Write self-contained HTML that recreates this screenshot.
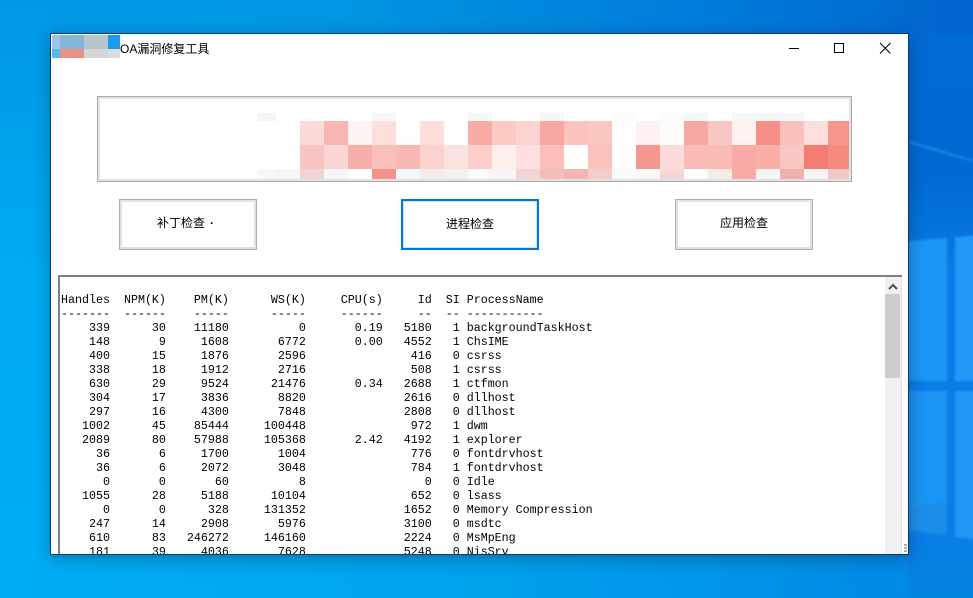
<!DOCTYPE html>
<html lang="zh">
<head>
<meta charset="utf-8">
<title>OA漏洞修复工具</title>
<style>
html,body{margin:0;padding:0;width:973px;height:598px;overflow:hidden;background:#0090e4;font-family:"Liberation Sans","Noto Sans CJK SC",sans-serif}
#bg{position:absolute;left:0;top:0;width:973px;height:598px}
#win{position:absolute;left:51px;top:34px;width:857px;height:520px;background:#fff;box-shadow:0 0 0 1px rgba(10,50,85,.85),0 4px 16px rgba(0,30,70,.4);overflow:hidden}
.a{position:absolute}
#title{position:absolute;left:69px;top:7px;font-size:12px;line-height:17px;color:#000;white-space:nowrap}
.c{position:absolute;width:24px}
#imgbox{position:absolute;left:46px;top:62px;width:755px;height:86px;box-sizing:border-box;border:1px solid #a9a9a9;background:#fff;overflow:hidden}
#imgbox:before{content:"";position:absolute;left:0;top:0;right:0;bottom:0;border:2px solid #e2e2e2;z-index:2}
.btn{position:absolute;top:165px;width:138px;height:51px;box-sizing:border-box;border:1px solid #adadad;box-shadow:inset 0 0 0 2px #e1e1e1;background:#fff;font-size:12px;line-height:47px;text-align:center;color:#000;white-space:pre}
.btn.f{border:2px solid #0078d7;box-shadow:inset 0 0 0 1px #cfe3f5;line-height:47px}
#tb{position:absolute;left:7px;top:241px;width:842px;height:279px;background:#fff;border-left:2px solid #808080;border-top:2px solid #808080;overflow:hidden;box-sizing:content-box}
#tb pre{position:absolute;left:1px;top:16px;margin:0;font-family:"Liberation Mono",monospace;font-size:11.67px;line-height:14px;color:#000}
#sb{position:absolute;left:834px;top:243px;width:16px;height:277px;background:#f0f0f0}
#th{position:absolute;left:834px;top:260px;width:15px;height:84px;background:#cdcdcd}
#rl{position:absolute;left:850px;top:243px;width:1px;height:277px;background:#e3e3e3}
.dot{position:absolute;left:853px;width:3px;height:2px;background:#b0b0b0}
</style>
</head>
<body>
<svg id="bg" viewBox="0 0 973 598" xmlns="http://www.w3.org/2000/svg">
<defs>
<linearGradient id="top" x1="0" y1="0" x2="1" y2="0">
<stop offset="0" stop-color="#0098e6"/>
<stop offset="0.35" stop-color="#0096e2"/>
<stop offset="0.8" stop-color="#0076d8"/>
<stop offset="1" stop-color="#0064ce"/>
</linearGradient>
<linearGradient id="left" x1="0" y1="0" x2="0" y2="1">
<stop offset="0" stop-color="#0098e6"/>
<stop offset="0.5" stop-color="#00aaf2"/>
<stop offset="1" stop-color="#00aef5"/>
</linearGradient>
<linearGradient id="bot" x1="0" y1="0" x2="1" y2="0">
<stop offset="0" stop-color="#00aef5"/>
<stop offset="0.5" stop-color="#00a2ec"/>
<stop offset="0.93" stop-color="#008ae4"/>
<stop offset="1" stop-color="#0082de"/>
</linearGradient>
<linearGradient id="right" x1="0" y1="0" x2="1" y2="0">
<stop offset="0" stop-color="#000000" stop-opacity="0"/>
</linearGradient>
<linearGradient id="rightv" x1="0" y1="0" x2="0" y2="1">
<stop offset="0" stop-color="#006bd2"/>
<stop offset="0.25" stop-color="#006ad2"/>
<stop offset="0.42" stop-color="#0a7ae6"/>
<stop offset="0.9" stop-color="#0a7ee6"/>
<stop offset="1" stop-color="#0084de"/>
</linearGradient>
<filter id="b" x="-20%" y="-20%" width="140%" height="140%"><feGaussianBlur stdDeviation="1"/></filter>
</defs>
<rect width="973" height="598" fill="url(#bot)"/>
<rect x="0" y="0" width="973" height="34" fill="url(#top)"/>
<rect x="0" y="0" width="51" height="554" fill="url(#left)"/>
<rect x="0" y="554" width="973" height="44" fill="url(#bot)"/>
<rect x="908" y="34" width="65" height="564" fill="url(#rightv)"/>
<g filter="url(#b)">
<polygon points="908,140 973,160 973,162 908,143" fill="#1a82ea"/>
<polygon points="908,241 947,238 947,381 908,381" fill="#1e96f4"/>
<polygon points="955,237 980,235 980,381 955,381" fill="#2098f6"/>
<polygon points="908,391 947,391 947,535 908,530" fill="#1e94f4"/>
<polygon points="955,391 980,391 980,540 955,537" fill="#2096f4"/>
<polygon points="908,506 947,502 947,535 908,530" fill="#1a8eea"/>
</g>
</svg>
<div id="win">
<div class="a" style="left:1px;top:1px;width:8px;height:14px;background:#9fc6e0"></div>
<div class="a" style="left:9px;top:1px;width:24px;height:14px;background:#85b6d8"></div>
<div class="a" style="left:33px;top:1px;width:24px;height:14px;background:#b9c5cc"></div>
<div class="a" style="left:57px;top:1px;width:12px;height:14px;background:#1a9ae8"></div>
<div class="a" style="left:1px;top:15px;width:8px;height:9px;background:#5ab7ea"></div>
<div class="a" style="left:9px;top:15px;width:24px;height:9px;background:#ea908b"></div>
<div class="a" style="left:33px;top:15px;width:24px;height:9px;background:#d5d5d5"></div>
<div class="a" style="left:57px;top:15px;width:12px;height:9px;background:#dcdcdc"></div>
<div id="title">OA漏洞修复工具</div>
<svg class="a" style="left:720px;top:0;width:137px;height:30px" viewBox="0 0 137 30" xmlns="http://www.w3.org/2000/svg" fill="none" stroke="#000" stroke-width="1">
<path d="M18 14.500H28"/>
<rect x="63.500" y="9.500" width="9" height="9"/>
<path d="M109 9L119.500 19.500M119.500 9L109 19.500"/>
</svg>
<div id="imgbox">
<div style="position:absolute;left:-98px;top:-97px;width:973px;height:300px">
<div class="c" style="left:257px;width:19px;top:113px;height:8px;background:#f5f5f5"></div>
<div class="c" style="left:372px;top:113px;height:8px;background:#f6f6f6"></div>
<div class="c" style="left:468px;top:113px;height:8px;background:#f6f6f6"></div>
<div class="c" style="left:540px;top:113px;height:8px;background:#f6f6f6"></div>
<div class="c" style="left:612px;top:113px;height:8px;background:#fcfcfc"></div>
<div class="c" style="left:660px;top:113px;height:8px;background:#fbfbfb"></div>
<div class="c" style="left:684px;top:113px;height:8px;background:#f7f7f7"></div>
<div class="c" style="left:732px;width:72px;top:113px;height:8px;background:#f7f7f7"></div>

<div class="c" style="left:300px;top:121px;height:24px;background:#fadad8"></div>
<div class="c" style="left:324px;top:121px;height:24px;background:#f8b5b1"></div>
<div class="c" style="left:348px;top:121px;height:24px;background:#fdf3f2"></div>
<div class="c" style="left:372px;top:121px;height:24px;background:#fcdedc"></div>
<div class="c" style="left:396px;top:121px;height:24px;background:#fefefe"></div>
<div class="c" style="left:420px;top:121px;height:24px;background:#fcdedb"></div>
<div class="c" style="left:468px;top:121px;height:24px;background:#f8aca6"></div>
<div class="c" style="left:492px;top:121px;height:24px;background:#fcc9c5"></div>
<div class="c" style="left:516px;top:121px;height:24px;background:#fcd5d2"></div>
<div class="c" style="left:540px;top:121px;height:24px;background:#f8a7a0"></div>
<div class="c" style="left:564px;top:121px;height:24px;background:#fcc3bf"></div>
<div class="c" style="left:588px;top:121px;height:24px;background:#fbc7c3"></div>
<div class="c" style="left:636px;top:121px;height:24px;background:#fdf2f1"></div>
<div class="c" style="left:660px;top:121px;height:24px;background:#fdfcfb"></div>
<div class="c" style="left:684px;top:121px;height:24px;background:#f8a8a3"></div>
<div class="c" style="left:708px;top:121px;height:24px;background:#f9c7c3"></div>
<div class="c" style="left:732px;top:121px;height:24px;background:#fef3f1"></div>
<div class="c" style="left:756px;top:121px;height:24px;background:#f58f87"></div>
<div class="c" style="left:780px;top:121px;height:24px;background:#f9c0bb"></div>
<div class="c" style="left:804px;top:121px;height:24px;background:#fcdfdc"></div>
<div class="c" style="left:828px;top:121px;height:24px;background:#f7948c"></div>

<div class="c" style="left:300px;top:145px;height:24px;background:#f9c5c2"></div>
<div class="c" style="left:324px;top:145px;height:24px;background:#fad7d4"></div>
<div class="c" style="left:348px;top:145px;height:24px;background:#f8aea8"></div>
<div class="c" style="left:372px;top:145px;height:24px;background:#fabfba"></div>
<div class="c" style="left:396px;top:145px;height:24px;background:#fab8b4"></div>
<div class="c" style="left:420px;top:145px;height:24px;background:#fcd2cf"></div>
<div class="c" style="left:444px;top:145px;height:24px;background:#fce2df"></div>
<div class="c" style="left:468px;top:145px;height:24px;background:#fccdc9"></div>
<div class="c" style="left:492px;top:145px;height:24px;background:#feefed"></div>
<div class="c" style="left:516px;top:145px;height:24px;background:#fde0dd"></div>
<div class="c" style="left:540px;top:145px;height:24px;background:#fabfbb"></div>
<div class="c" style="left:588px;top:145px;height:24px;background:#fac2be"></div>
<div class="c" style="left:612px;top:145px;height:24px;background:#fffcfc"></div>
<div class="c" style="left:636px;top:145px;height:24px;background:#f6978f"></div>
<div class="c" style="left:660px;top:145px;height:24px;background:#fcdcda"></div>
<div class="c" style="left:684px;top:145px;height:24px;background:#fabab6"></div>
<div class="c" style="left:708px;top:145px;height:24px;background:#fcbab5"></div>
<div class="c" style="left:732px;top:145px;height:24px;background:#f9aaa4"></div>
<div class="c" style="left:756px;top:145px;height:24px;background:#f9aea8"></div>
<div class="c" style="left:780px;top:145px;height:24px;background:#fbc6c3"></div>
<div class="c" style="left:804px;top:145px;height:24px;background:#f47c72"></div>
<div class="c" style="left:828px;top:145px;height:24px;background:#f58a7f"></div>

<div class="c" style="left:257px;width:19px;top:169px;height:10px;background:#f8f8f8"></div>
<div class="c" style="left:276px;top:169px;height:10px;background:#f6f6f6"></div>
<div class="c" style="left:300px;top:169px;height:10px;background:#f2d3d1"></div>
<div class="c" style="left:324px;top:169px;height:10px;background:#f6f6f6"></div>
<div class="c" style="left:372px;top:169px;height:10px;background:#f5938a"></div>
<div class="c" style="left:396px;top:169px;height:10px;background:#f2f7fd"></div>
<div class="c" style="left:420px;top:169px;height:10px;background:#f7ebea"></div>
<div class="c" style="left:444px;top:169px;height:10px;background:#f4f1ef"></div>
<div class="c" style="left:468px;top:169px;height:10px;background:#fafafa"></div>
<div class="c" style="left:492px;top:169px;height:10px;background:#f6f6f6"></div>
<div class="c" style="left:516px;top:169px;height:10px;background:#f2d6d4"></div>
<div class="c" style="left:540px;top:169px;height:10px;background:#f2bebb"></div>
<div class="c" style="left:564px;top:169px;height:10px;background:#f4b6b3"></div>
<div class="c" style="left:588px;top:169px;height:10px;background:#f3cdca"></div>
<div class="c" style="left:612px;top:169px;height:10px;background:#f9f9f9"></div>
<div class="c" style="left:636px;top:169px;height:10px;background:#f8f8f8"></div>
<div class="c" style="left:660px;top:169px;height:10px;background:#f4d7d6"></div>
<div class="c" style="left:708px;top:169px;height:10px;background:#f5ecea"></div>
<div class="c" style="left:732px;top:169px;height:10px;background:#f9aba5"></div>
<div class="c" style="left:756px;top:169px;height:10px;background:#f5f5f5"></div>
<div class="c" style="left:780px;top:169px;height:10px;background:#f0afac"></div>
<div class="c" style="left:804px;top:169px;height:10px;background:#f5f5f5"></div>
<div class="c" style="left:828px;top:169px;height:10px;background:#f3c8c7"></div>
</div>
</div>
<div class="btn" style="left:68px;text-align:left;padding-left:37px">补丁检查<span style="position:absolute;left:90px;top:0;font-weight:bold">·</span></div>
<div class="btn f" style="left:350px">进程检查</div>
<div class="btn" style="left:624px">应用检查</div>
<div id="tb"><pre>Handles  NPM(K)    PM(K)      WS(K)     CPU(s)     Id  SI ProcessName
-------  ------    -----      -----     ------     --  -- -----------
    339      30    11180          0       0.19   5180   1 backgroundTaskHost
    148       9     1608       6772       0.00   4552   1 ChsIME
    400      15     1876       2596               416   0 csrss
    338      18     1912       2716               508   1 csrss
    630      29     9524      21476       0.34   2688   1 ctfmon
    304      17     3836       8820              2616   0 dllhost
    297      16     4300       7848              2808   0 dllhost
   1002      45    85444     100448               972   1 dwm
   2089      80    57988     105368       2.42   4192   1 explorer
     36       6     1700       1004               776   0 fontdrvhost
     36       6     2072       3048               784   1 fontdrvhost
      0       0       60          8                 0   0 Idle
   1055      28     5188      10104               652   0 lsass
      0       0      328     131352              1652   0 Memory Compression
    247      14     2908       5976              3100   0 msdtc
    610      83   246272     146160              2224   0 MsMpEng
    181      39     4036       7628              5248   0 NisSrv</pre></div>
<div id="sb"></div>
<div id="th"></div>
<div id="rl"></div>
<svg class="a" style="left:834px;top:243px;width:16px;height:17px" viewBox="0 0 16 17" xmlns="http://www.w3.org/2000/svg"><path d="M4 12L8 8L12 12" fill="none" stroke="#505050" stroke-width="2"/></svg>
<div class="dot" style="top:510px"></div>
<div class="dot" style="top:513px"></div>
<div class="dot" style="top:516px"></div>
</div>
</body>
</html>
